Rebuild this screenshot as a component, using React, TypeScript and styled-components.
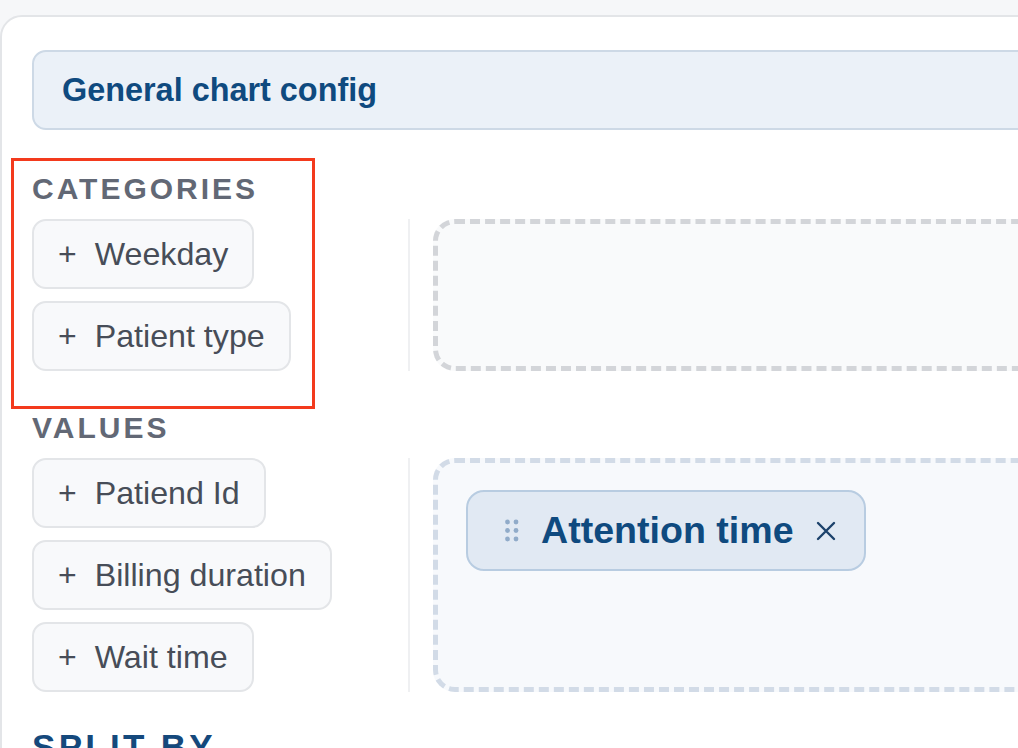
import React from 'react';
import styled, {createGlobalStyle} from 'styled-components';

const GlobalStyle = createGlobalStyle`
  html, body {
    margin: 0;
    padding: 0;
    background: #f6f7f9;
    overflow: hidden;
    font-family: "Liberation Sans", Arial, sans-serif;
  }
`

const sections = [
  {
    title: 'CATEGORIES',
    fields: ['Weekday', 'Patient type'],
    picked: [] as string[]
  },
  {
    title: 'VALUES',
    fields: ['Patiend Id', 'Billing duration', 'Wait time'],
    picked: ['Attention time']
  }
]

const Grip = () => (
  <svg width="14" height="24" viewBox="0 0 14 24">
    {[3, 11.5, 20].map(cy => [2.5, 11].map(cx =>
      <circle key={`${cx}-${cy}`} cx={cx} cy={cy} r="2.4" fill="#90abc9"/>
    ))}
  </svg>
)

const CloseIcon = () => (
  <svg width="20" height="20" viewBox="0 0 20 20">
    <path d="M2 2 L18 18 M18 2 L2 18" stroke="#1c426b" strokeWidth="2.4" strokeLinecap="round"/>
  </svg>
)

const FieldChip = ({name}: { name: string }) => (
  <Field>
    <Plus>+</Plus>
    {name}
  </Field>
)

const PickedChip = ({name}: { name: string }) => (
  <Picked>
    <Grip/>
    <PickedName>{name}</PickedName>
    <CloseIcon/>
  </Picked>
)

export default function App() {
  return (
    <>
      <GlobalStyle/>
      <Card>
        <ConfigHeader>General chart config</ConfigHeader>
        <Stack>
          {sections.map(section => (
            <Section key={section.title}>
              <Label>{section.title}</Label>
              <Row>
                <FieldList>
                  {section.fields.map(f => <FieldChip key={f} name={f}/>)}
                </FieldList>
                <Divider/>
                <DropZone filled={section.picked.length > 0}>
                  {section.picked.map(p => <PickedChip key={p} name={p}/>)}
                </DropZone>
              </Row>
            </Section>
          ))}
          <Section>
            <Label accent>SPLIT BY</Label>
          </Section>
        </Stack>
        <Highlight/>
      </Card>
    </>
  )
}

const Card = styled.div`
  position: relative;
  margin-top: 15px;
  width: 1100px;
  min-height: 900px;
  box-sizing: border-box;
  padding: 33px 32px 0 30px;
  background: #ffffff;
  border: 2px solid #e3e5e8;
  border-radius: 22px 0 0 0;
`

const ConfigHeader = styled.div`
  height: 80px;
  box-sizing: border-box;
  display: flex;
  align-items: center;
  padding-left: 28px;
  background: #ebf1f8;
  border: 2px solid #cdd9e6;
  border-radius: 14px;
  color: #0f4a7f;
  font-size: 32.4px;
  font-weight: 700;
  margin-bottom: 42px;
`

const Stack = styled.div`
  display: flex;
  flex-direction: column;
  gap: 40px;
`

const Section = styled.section`
  display: flex;
  flex-direction: column;
  gap: 13px;
`

const Label = styled.div<{ accent?: boolean }>`
  font-weight: 700;
  font-size: ${props => props.accent ? '35px' : '30px'};
  line-height: ${props => props.accent ? '30px' : '34px'};
  letter-spacing: ${props => props.accent ? '3.3px' : '3px'};
  color: ${props => props.accent ? '#15497c' : '#626875'};
`

const Row = styled.div`
  display: flex;
  align-items: stretch;
`

const FieldList = styled.div`
  width: 376px;
  flex-shrink: 0;
  display: flex;
  flex-direction: column;
  align-items: flex-start;
  gap: 12px;
`

const Field = styled.div`
  height: 70px;
  box-sizing: border-box;
  display: flex;
  align-items: center;
  gap: 18px;
  padding: 0 24px;
  background: #f8f9fb;
  border: 2px solid #e3e5e8;
  border-radius: 14px;
  color: #474d58;
  font-size: 32.2px;
`

const Plus = styled.span`
  font-size: 32px;
  color: #474d58;
`

const Divider = styled.div`
  width: 2px;
  flex-shrink: 0;
  background: #eff0f2;
  margin-right: 23px;
`

const DropZone = styled.div<{ filled: boolean }>`
  flex: 1;
  box-sizing: border-box;
  padding: 27px 28px;
  border: 5px dashed ${props => props.filled ? '#d2dbe7' : '#d3d5d9'};
  border-radius: 22px;
  background: ${props => props.filled ? '#f7f9fc' : '#f9fafb'};
  display: flex;
  align-items: flex-start;
  flex-wrap: wrap;
  gap: 12px;
`

const Picked = styled.div`
  height: 81px;
  box-sizing: border-box;
  display: flex;
  align-items: center;
  gap: 22px;
  padding: 0 28px 0 37px;
  background: #e1e9f3;
  border: 2px solid #b8cce1;
  border-radius: 18px;
`

const PickedName = styled.span`
  color: #0f4a7f;
  font-size: 37.6px;
  font-weight: 700;
`

const Highlight = styled.div`
  position: absolute;
  left: 9px;
  top: 141px;
  width: 304px;
  height: 251px;
  box-sizing: border-box;
  border: 3px solid #f33a1d;
  pointer-events: none;
`
